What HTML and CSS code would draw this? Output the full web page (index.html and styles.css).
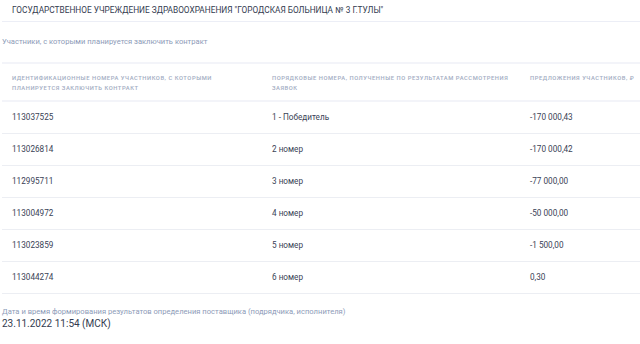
FILE: index.html
```html
<!DOCTYPE html>
<html lang="ru">
<head>
<meta charset="utf-8">
<link rel="stylesheet" href="styles.css">
</head>
<body>
<div class="page">
  <div class="title">ГОСУДАРСТВЕННОЕ УЧРЕЖДЕНИЕ ЗДРАВООХРАНЕНИЯ "ГОРОДСКАЯ БОЛЬНИЦА № 3 Г.ТУЛЫ"</div>
  <div class="section-label">Участники, с которыми планируется заключить контракт</div>
  <table class="tbl">
    <thead>
      <tr>
        <th class="c1">Идентификационные номера участников, с которыми планируется заключить контракт</th>
        <th class="c2">Порядковые номера, полученные по результатам рассмотрения заявок</th>
        <th class="c3">Предложения участников, ₽</th>
      </tr>
    </thead>
    <tbody>
      <tr><td>113037525</td><td>1 - Победитель</td><td>-170 000,43</td></tr>
      <tr><td>113026814</td><td>2 номер</td><td>-170 000,42</td></tr>
      <tr><td>112995711</td><td>3 номер</td><td>-77 000,00</td></tr>
      <tr><td>113004972</td><td>4 номер</td><td>-50 000,00</td></tr>
      <tr><td>113023859</td><td>5 номер</td><td>-1 500,00</td></tr>
      <tr><td>113044274</td><td>6 номер</td><td>0,30</td></tr>
    </tbody>
  </table>
  <div class="date-block">
    <div class="date-label">Дата и время формирования результатов определения поставщика (подрядчика, исполнителя)</div>
    <div class="date-value">23.11.2022 11:54 (МСК)</div>
  </div>
</div>
</body>
</html>
```
FILE: styles.css
```css
* { box-sizing: border-box; }
html, body { margin: 0; padding: 0; background: #fff; }
body { font-family: Roboto, "Noto Sans", sans-serif; color: #334059; }
.page { padding: 0 0 0 2px; }
.title {
  padding: 5px 10px 0 10px;
  height: 22px;
  font-size: 8.3px;
  color: #333b4f;
  border-bottom: 1px solid #eceef6;
}
.section-label {
  padding-top: 15px;
  height: 40px;
  font-size: 7.6px;
  color: #8d9bb8;
}
.tbl {
  width: 100%;
  border-collapse: collapse;
  table-layout: fixed;
}
.tbl th {
  text-align: left;
  font-weight: 500;
  font-size: 5.8px;
  letter-spacing: 0.55px;
  text-transform: uppercase;
  color: #a2acc2;
  line-height: 10px;
  padding: 9px 10px 7px 10px;
  vertical-align: top;
  border-top: 2px solid #f3f4f9;
  border-bottom: 2px solid #f3f4f9;
}
.tbl th.c1 { width: 260px; padding-right: 40px; }
.tbl th.c2 { width: 258px; padding-right: 2px; }
.tbl th.c3 { padding-right: 0; white-space: nowrap; }
.tbl td {
  font-size: 8.2px;
  color: #3a4256;
  height: 32px;
  padding: 0 10px 1px 10px;
  border-bottom: 1px solid #eceef3;
}
.date-block { padding-top: 12px; }
.date-label { font-size: 7.6px; color: #8d9bb8; line-height: 11px; }
.date-value { font-size: 10px; color: #333b4f; line-height: 14px; }
```
